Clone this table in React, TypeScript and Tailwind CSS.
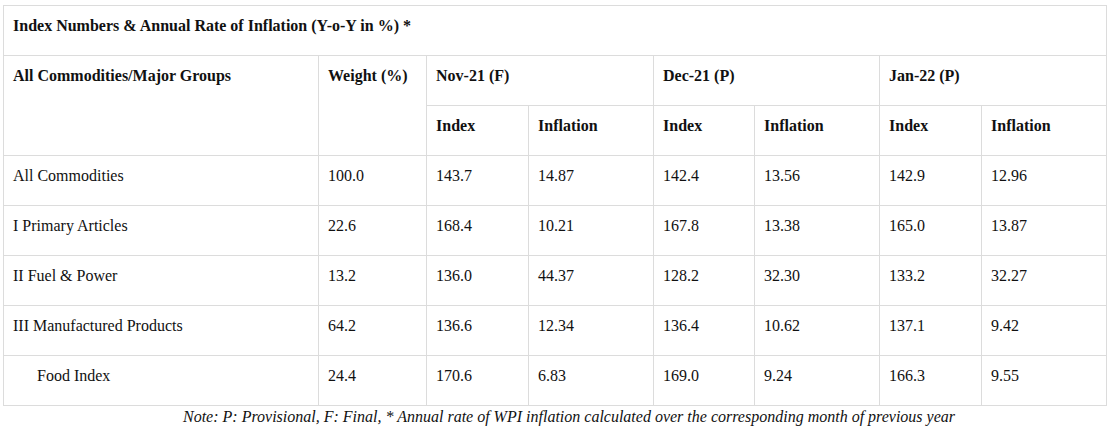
type Row = {
  label: string
  indent?: boolean
  weight: string
  values: string[]
}

const rows: Row[] = [
  { label: 'All Commodities', weight: '100.0', values: ['143.7', '14.87', '142.4', '13.56', '142.9', '12.96'] },
  { label: 'I Primary Articles', weight: '22.6', values: ['168.4', '10.21', '167.8', '13.38', '165.0', '13.87'] },
  { label: 'II Fuel & Power', weight: '13.2', values: ['136.0', '44.37', '128.2', '32.30', '133.2', '32.27'] },
  { label: 'III Manufactured Products', weight: '64.2', values: ['136.6', '12.34', '136.4', '10.62', '137.1', '9.42'] },
  { label: 'Food Index', indent: true, weight: '24.4', values: ['170.6', '6.83', '169.0', '9.24', '166.3', '9.55'] },
]

const months = ['Nov-21 (F)', 'Dec-21 (P)', 'Jan-22 (P)']

const cell = 'border border-[#dcdcdc] align-top pl-[9px] pt-[11px] h-[50px] text-left'

export default function App() {
  return (
    <div className="bg-white w-[1113px] h-[438px] pt-[5px] pl-[3px] text-[16px] leading-[18px] text-[#111] [font-family:'Liberation_Serif','Times_New_Roman',serif]">
      <table className="border-collapse w-[1103px] table-fixed">
        <colgroup>
          <col className="w-[315px]" />
          <col className="w-[108px]" />
          <col className="w-[102px]" />
          <col className="w-[125px]" />
          <col className="w-[101px]" />
          <col className="w-[125px]" />
          <col className="w-[102px]" />
          <col className="w-[125px]" />
        </colgroup>
        <thead>
          <tr>
            <th colSpan={8} className={`${cell} font-bold`}>
              Index Numbers &amp; Annual Rate of Inflation (Y-o-Y in %) *
            </th>
          </tr>
          <tr>
            <th rowSpan={2} className={`${cell} font-bold`}>All Commodities/Major Groups</th>
            <th rowSpan={2} className={`${cell} font-bold`}>Weight (%)</th>
            {months.map((m) => (
              <th key={m} colSpan={2} className={`${cell} font-bold`}>{m}</th>
            ))}
          </tr>
          <tr>
            {months.flatMap((m) => [
              <th key={`${m}-i`} className={`${cell} font-bold`}>Index</th>,
              <th key={`${m}-f`} className={`${cell} font-bold`}>Inflation</th>,
            ])}
          </tr>
        </thead>
        <tbody>
          {rows.map((r) => (
            <tr key={r.label}>
              <td className={`${cell} ${r.indent ? 'pl-[33px]' : ''}`}>{r.label}</td>
              <td className={cell}>{r.weight}</td>
              {r.values.map((v, i) => (
                <td key={i} className={cell}>{v}</td>
              ))}
            </tr>
          ))}
        </tbody>
      </table>
      {/* footnote sits a little right of the table centre */}
      <p className="text-center italic leading-[18px] mt-[2px] pl-[22px]">
        Note: P: Provisional, F: Final, * Annual rate of WPI inflation calculated over the corresponding month of previous year
      </p>
    </div>
  )
}
